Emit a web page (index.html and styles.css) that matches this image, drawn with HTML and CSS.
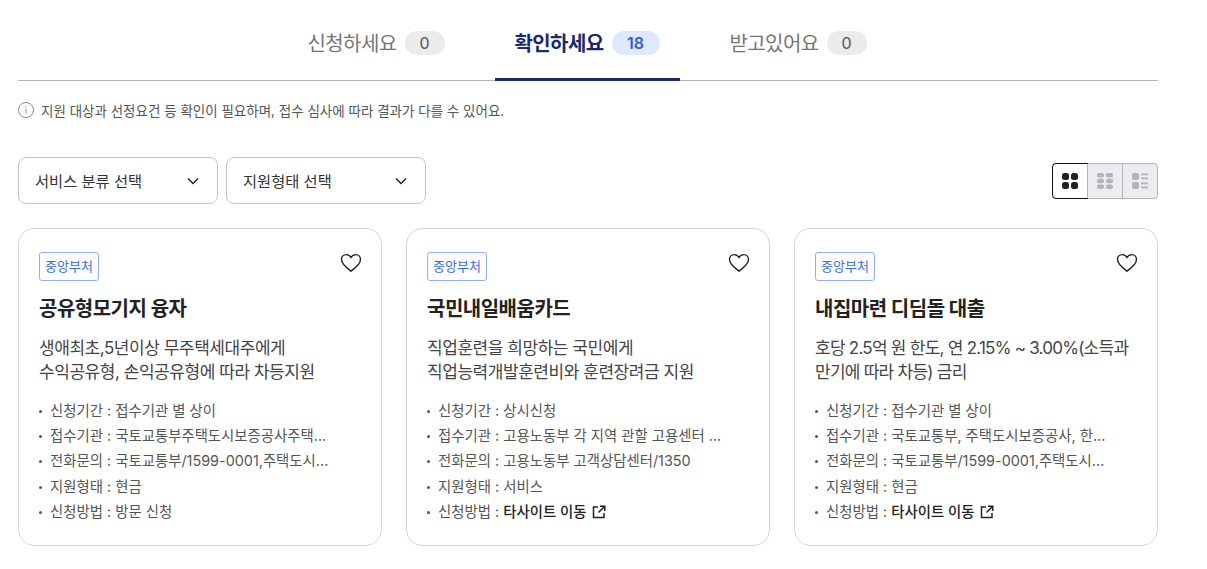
FILE: index.html
```html
<!DOCTYPE html>
<html lang="ko">
<head>
    <meta charset="UTF-8">
    <title>확인하세요</title>
    <link rel="stylesheet" href="styles.css">
</head>
<body>
    <div class="wrap">
        <div class="tabs">
            <a class="tab">신청하세요 <span class="count">0</span></a>
            <a class="tab active">확인하세요 <span class="count">18</span></a>
            <a class="tab">받고있어요 <span class="count">0</span></a>
        </div>

        <p class="notice">
            <svg width="16" height="16" viewBox="0 0 16 16" fill="none" stroke="#8a8a8a"><circle cx="8" cy="8" r="7.5"/><path d="M8 7v4.5"/><path d="M8 4.4v1.2"/></svg>
            지원 대상과 선정요건 등 확인이 필요하며, 접수 심사에 따라 결과가 다를 수 있어요.
        </p>

        <div class="toolbar">
            <div class="selects">
                <div class="select">서비스 분류 선택
                    <svg width="12" height="8" viewBox="0 0 12 8" fill="none" stroke="#222" stroke-width="1.4"><path d="M1 1.5l5 5 5-5"/></svg>
                </div>
                <div class="select">지원형태 선택
                    <svg width="12" height="8" viewBox="0 0 12 8" fill="none" stroke="#222" stroke-width="1.4"><path d="M1 1.5l5 5 5-5"/></svg>
                </div>
            </div>
            <div class="views">
                <button class="view on">
                    <svg width="16" height="16" viewBox="0 0 16 16" fill="#222"><rect width="7" height="7" rx="2.5"/><rect x="9" width="7" height="7" rx="2.5"/><rect y="9" width="7" height="7" rx="2.5"/><rect x="9" y="9" width="7" height="7" rx="2.5"/></svg>
                </button>
                <button class="view">
                    <svg width="16" height="16" viewBox="0 0 16 16" fill="#b4b4b4"><rect width="7" height="4.4" rx="2"/><rect x="9" width="7" height="4.4" rx="2"/><rect y="5.8" width="7" height="4.4" rx="2"/><rect x="9" y="5.8" width="7" height="4.4" rx="2"/><rect y="11.6" width="7" height="4.4" rx="2"/><rect x="9" y="11.6" width="7" height="4.4" rx="2"/></svg>
                </button>
                <button class="view">
                    <svg width="16" height="16" viewBox="0 0 16 16" fill="#b4b4b4"><rect width="7" height="7" rx="2"/><rect y="9" width="7" height="7" rx="2"/><rect x="9" y="0.5" width="7" height="1.8"/><rect x="9" y="4.5" width="7" height="1.8"/><rect x="9" y="9.5" width="7" height="1.8"/><rect x="9" y="13.5" width="7" height="1.8"/></svg>
                </button>
            </div>
        </div>

        <div class="cards">
            <div class="card">
                <div class="card-top">
                    <span class="tag">중앙부처</span>
                    <svg class="heart" width="22" height="20" viewBox="0 0 22 20" fill="none" stroke="#222" stroke-width="1.4"><path d="M11 18.2C7 15 1.5 11.5 1.5 6.6 1.5 3.7 3.7 1.6 6.3 1.6c1.9 0 3.6 1 4.7 2.9 1.100-1.900 2.800-2.900 4.700-2.900 2.600 0 4.800 2.100 4.800 5 0 4.900-5.500 8.400-9.500 11.600z"/></svg>
                </div>
                <h3>공유형모기지 융자</h3>
                <p class="desc">생애최초,5년이상 무주택세대주에게<br>수익공유형, 손익공유형에 따라 차등지원</p>
                <ul>
                    <li>신청기간 : 접수기관 별 상이</li>
                    <li>접수기관 : 국토교통부주택도시보증공사주택...</li>
                    <li>전화문의 : 국토교통부/1599-0001,주택도시...</li>
                    <li>지원형태 : 현금</li>
                    <li>신청방법 : 방문 신청</li>
                </ul>
            </div>
            <div class="card">
                <div class="card-top">
                    <span class="tag">중앙부처</span>
                    <svg class="heart" width="22" height="20" viewBox="0 0 22 20" fill="none" stroke="#222" stroke-width="1.4"><path d="M11 18.2C7 15 1.5 11.5 1.5 6.6 1.5 3.7 3.7 1.6 6.3 1.6c1.9 0 3.6 1 4.7 2.9 1.100-1.900 2.800-2.900 4.700-2.900 2.600 0 4.800 2.100 4.800 5 0 4.900-5.500 8.400-9.500 11.600z"/></svg>
                </div>
                <h3>국민내일배움카드</h3>
                <p class="desc">직업훈련을 희망하는 국민에게<br>직업능력개발훈련비와 훈련장려금 지원</p>
                <ul>
                    <li>신청기간 : 상시신청</li>
                    <li>접수기관 : 고용노동부 각 지역 관할 고용센터 ...</li>
                    <li>전화문의 : 고용노동부 고객상담센터/1350</li>
                    <li>지원형태 : 서비스</li>
                    <li>신청방법 : <a class="ext">타사이트 이동
                        <svg width="14" height="14" viewBox="0 0 14 14" fill="none" stroke="#222" stroke-width="1.5"><path d="M6 2H1.500v10.500H12V8"/><path d="M8 1.200h4.800V6"/><path d="M12.500 1.500L6.500 7.500"/></svg>
                    </a></li>
                </ul>
            </div>
            <div class="card">
                <div class="card-top">
                    <span class="tag">중앙부처</span>
                    <svg class="heart" width="22" height="20" viewBox="0 0 22 20" fill="none" stroke="#222" stroke-width="1.4"><path d="M11 18.2C7 15 1.5 11.5 1.5 6.6 1.5 3.7 3.7 1.6 6.3 1.6c1.9 0 3.6 1 4.7 2.9 1.100-1.900 2.800-2.900 4.700-2.900 2.600 0 4.800 2.100 4.800 5 0 4.900-5.500 8.400-9.500 11.600z"/></svg>
                </div>
                <h3>내집마련 디딤돌 대출</h3>
                <p class="desc tight">호당 2.5억 원 한도, 연 2.15% ~ 3.00%(소득과<br>만기에 따라 차등) 금리</p>
                <ul>
                    <li>신청기간 : 접수기관 별 상이</li>
                    <li>접수기관 : 국토교통부, 주택도시보증공사, 한...</li>
                    <li>전화문의 : 국토교통부/1599-0001,주택도시...</li>
                    <li>지원형태 : 현금</li>
                    <li>신청방법 : <a class="ext">타사이트 이동
                        <svg width="14" height="14" viewBox="0 0 14 14" fill="none" stroke="#222" stroke-width="1.5"><path d="M6 2H1.500v10.500H12V8"/><path d="M8 1.200h4.800V6"/><path d="M12.500 1.500L6.500 7.500"/></svg>
                    </a></li>
                </ul>
            </div>
        </div>
    </div>
</body>
</html>
```

FILE: styles.css
```css
* {
    box-sizing: border-box;
}
body {
    margin: 0;
    background: #fff;
    color: #222;
    font-family: Inter, "Noto Sans CJK KR", sans-serif;
}
.wrap {
    width: 1140px;
    margin-left: 18px;
}
.tabs {
    display: flex;
    justify-content: center;
    gap: 30px;
    height: 81px;
    padding-right: 2px;
    border-bottom: 1px solid #b4b4b4;
}
.tab {
    display: flex;
    align-items: center;
    gap: 8px;
    height: 81px;
    padding: 4px 20px 0;
    font-size: 20px;
    letter-spacing: -0.6px;
    color: #757575;
    white-space: nowrap;
}
.tab.active {
    color: #1a2a6c;
    font-weight: 700;
    border-bottom: 3px solid #1a2a6c;
    padding-top: 7px;
}
.count {
    display: inline-block;
    min-width: 40px;
    height: 24px;
    line-height: 24px;
    padding: 0 10px;
    border-radius: 12px;
    background: #ebebeb;
    color: #555;
    font-size: 16px;
    font-weight: 400;
    text-align: center;
    letter-spacing: 0;
}
.active .count {
    min-width: 48px;
    background: #dfe9fd;
    color: #2f5fd0;
    font-weight: 600;
}
.notice {
    display: flex;
    align-items: center;
    gap: 7px;
    margin: 0;
    height: 20px;
    margin-top: 19px;
    font-size: 13.5px;
    color: #555;
}
.toolbar {
    display: flex;
    justify-content: space-between;
    align-items: center;
    margin-top: 37px;
}
.selects {
    display: flex;
    gap: 8px;
}
.select {
    display: flex;
    justify-content: space-between;
    align-items: center;
    width: 200px;
    height: 47px;
    padding: 0 18px 2px 16px;
    border: 1px solid #c4c4c4;
    border-radius: 8px;
    font-size: 15.3px;
    color: #333;
}
.select svg {
    margin-top: 2px;
}
.views {
    display: flex;
    border: 1px solid #b4b4b4;
    border-radius: 4px;
    background: #ebecef;
}
.view {
    display: flex;
    align-items: center;
    justify-content: center;
    width: 35px;
    height: 34px;
    padding: 0;
    border: none;
    border-left: 1px solid #b4b4b4;
    background: none;
}
.view:first-child {
    width: 34px;
    border-left: none;
}
.view.on {
    background: #fff;
    outline: 1px solid #111;
    border-radius: 3px 0 0 3px;
}
.cards {
    display: flex;
    gap: 24px;
    margin-top: 24px;
}
.card {
    width: 364px;
    height: 318px;
    padding: 23px 20px 0;
    border: 1px solid #d4d4d4;
    border-radius: 16px;
}
.card-top {
    display: flex;
    justify-content: space-between;
    align-items: flex-start;
}
.tag {
    height: 29px;
    line-height: 27px;
    padding: 0 5px;
    border: 1px solid #8fb0f2;
    border-radius: 3px;
    color: #2f6fe4;
    font-size: 13px;
}
.heart {
    margin: 1px -1px 0 0;
}
h3 {
    margin: 13px 0 0;
    font-size: 20px;
    line-height: 30px;
    font-weight: 700;
    color: #222;
    letter-spacing: -0.5px;
}
.desc {
    margin: 12px 0 0;
    font-size: 17px;
    line-height: 24px;
    color: #444;
    letter-spacing: -0.45px;
    white-space: nowrap;
}
.desc.tight {
    letter-spacing: -0.75px;
}
ul {
    list-style: none;
    margin: 13.6px 0 0;
    padding: 0;
}
li {
    position: relative;
    height: 25.4px;
    line-height: 25px;
    padding-left: 11px;
    font-size: 14.4px;
    color: #555;
    white-space: nowrap;
}
li::before {
    content: "";
    position: absolute;
    left: 0;
    top: 12px;
    width: 3px;
    height: 3px;
    border-radius: 50%;
    background: #555;
}
.ext {
    color: #222;
    font-weight: 500;
}
.ext svg {
    margin-left: 2px;
    vertical-align: -2px;
}
```
